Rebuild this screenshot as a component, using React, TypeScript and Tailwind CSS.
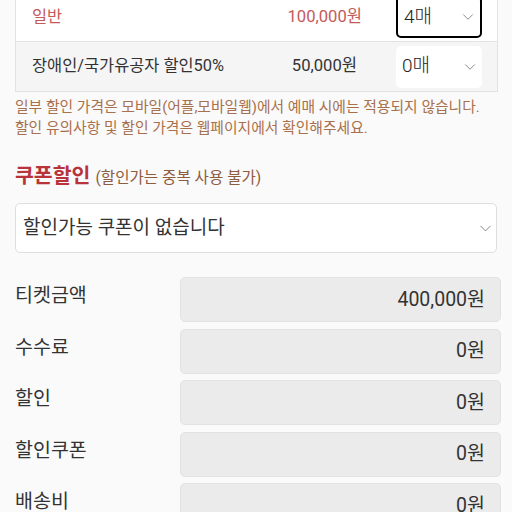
import { ChevronDown } from "lucide-react";

const tickets = [
  { name: "일반", price: "100,000원", qty: "4매", active: true },
  { name: "장애인/국가유공자 할인50%", price: "50,000원", qty: "0매", active: false },
];

const summary = [
  { label: "티켓금액", value: "400,000원" },
  { label: "수수료", value: "0원" },
  { label: "할인", value: "0원" },
  { label: "할인쿠폰", value: "0원" },
  { label: "배송비", value: "0원" },
];

export default function App() {
  return (
    <div
      className="min-h-[512px] bg-[#fafafa] overflow-hidden"
      style={{ fontFamily: 'Roboto, "Noto Sans CJK KR", sans-serif' }}
    >
      {/* Ticket table */}
      <div className="-mt-[8px] mx-[15px] mr-[14px] border border-[#e3e3e3]">
        {tickets.map((t, i) => (
          <div
            key={t.name}
            className={`flex items-center h-[49px] pl-[16px] pr-[15px] ${
              i === 0 ? "bg-white border-b border-[#e3e3e3]" : "bg-[#f5f5f5]"
            }`}
          >
            <span
              className={`flex-1 text-[16.4px] ${
                t.active ? "text-[#c45a5a]" : "text-[#333]"
              }`}
            >
              {t.name}
            </span>
            <span
              className={`text-[16.6px] ${
                t.active ? "text-[#c45a5a]" : "text-[#333] mr-[5px]"
              }`}
            >
              {t.price}
            </span>
            <div
              className={`ml-[34px] w-[86px] h-[42px] rounded-[5px] bg-white flex items-center justify-between pl-[6px] pr-[3px] ${
                t.active ? "border-2 border-black" : ""
              }`}
            >
              <span className="text-[19px] font-light text-[#222]">{t.qty}</span>
              <ChevronDown className="w-[18px] h-[18px] text-[#666]" strokeWidth={1} />
            </div>
          </div>
        ))}
      </div>

      {/* Notice */}
      <p className="mt-[5px] px-[15px] text-[14.8px] leading-[21px] text-[#a8704c] whitespace-nowrap">
        일부 할인 가격은 모바일(어플,모바일웹)에서 예매 시에는 적용되지 않습니다.
        <br />
        할인 유의사항 및 할인 가격은 웹페이지에서 확인해주세요.
      </p>

      {/* Coupon */}
      <div className="mt-[23px] px-[15px] flex items-baseline gap-[5px] leading-[28px]">
        <span className="text-[20.5px] font-bold text-[#b8333a]">쿠폰할인</span>
        <span className="text-[15.6px] text-[#8e5c3e]">(할인가는 중복 사용 불가)</span>
      </div>
      <div className="mt-[11px] mx-[15px] h-[50px] bg-white border border-[#dedede] rounded-[5px] flex items-center justify-between pl-[7px] pr-[1px]">
        <span className="text-[19px] text-[#333]">할인가능 쿠폰이 없습니다</span>
        <ChevronDown className="w-[19px] h-[19px] text-[#666]" strokeWidth={1} />
      </div>

      {/* Summary */}
      <div className="mt-[24px] pl-[15px] pr-[11px] flex flex-col gap-[6.5px]">
        {summary.map((s) => (
          <div key={s.label} className="flex items-start justify-between">
            <span className="pt-[5px] text-[19.5px] leading-[27px] text-[#333]">{s.label}</span>
            <div className="w-[321px] h-[45px] bg-[#ebebeb] border border-[#e2e2e2] rounded-[5px] flex items-center justify-end pr-[15px]">
              <span className="text-[19.5px] text-[#333]">{s.value}</span>
            </div>
          </div>
        ))}
      </div>
    </div>
  );
}
